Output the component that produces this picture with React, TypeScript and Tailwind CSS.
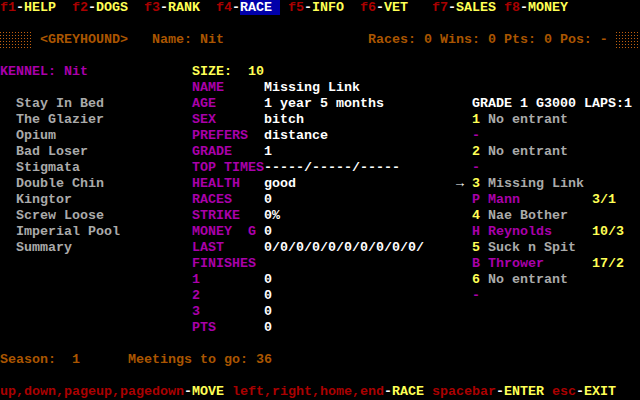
const RED = "text-[#aa0000]";
const YEL = "text-[#ffff55]";
const WHT = "text-white";
const BRN = "text-[#aa5500]";
const MAG = "text-[#aa00aa]";
const GRY = "text-[#aaaaaa]";

function Line({ children }: { children?: React.ReactNode }) {
  return <div className="h-4 leading-4 whitespace-pre">{children}</div>;
}

function Key({ k, label, active }: { k: string; label: string; active?: boolean }) {
  return (
    <>
      <span className={RED}>{k}</span>
      <span className={WHT}>-</span>
      {active ? (
        <span className="bg-[#0000aa] text-white">{label}</span>
      ) : (
        <span className={YEL}>{label}</span>
      )}
    </>
  );
}

function Shade() {
  return (
    <span className="inline-block h-4 w-[32px] align-top bg-[conic-gradient(at_1px_1px,transparent_75%,#c06010_0)] bg-size-[3px_3px]" />
  );
}

const dogs = [
  "Stay In Bed",
  "The Glazier",
  "Opium",
  "Bad Loser",
  "Stigmata",
  "Double Chin",
  "Kingtor",
  "Screw Loose",
  "Imperial Pool",
  "Summary",
];

const details: [string, string][] = [
  ["NAME", "Missing Link"],
  ["AGE", "1 year 5 months"],
  ["SEX", "bitch"],
  ["PREFERS", "distance"],
  ["GRADE", "1"],
  ["TOP TIMES", "-----/-----/-----"],
  ["HEALTH", "good"],
  ["RACES", "0"],
  ["STRIKE", "0%"],
  ["MONEY  G", "0"],
  ["LAST", "0/0/0/0/0/0/0/0/0/0/"],
  ["FINISHES", ""],
  ["1", "0"],
  ["2", "0"],
  ["3", "0"],
  ["PTS", "0"],
];

type Entry =
  | { kind: "dog"; trap: string; name: string; sel?: boolean }
  | { kind: "trainer"; mark: string; name: string; odds: string }
  | { kind: "none" };

const card: Entry[] = [
  { kind: "dog", trap: "1", name: "No entrant" },
  { kind: "none" },
  { kind: "dog", trap: "2", name: "No entrant" },
  { kind: "none" },
  { kind: "dog", trap: "3", name: "Missing Link", sel: true },
  { kind: "trainer", mark: "P", name: "Mann", odds: "3/1" },
  { kind: "dog", trap: "4", name: "Nae Bother" },
  { kind: "trainer", mark: "H", name: "Reynolds", odds: "10/3" },
  { kind: "dog", trap: "5", name: "Suck n Spit" },
  { kind: "trainer", mark: "B", name: "Thrower", odds: "17/2" },
  { kind: "dog", trap: "6", name: "No entrant" },
  { kind: "none" },
];

export default function App() {
  return (
    <div className="w-[640px] h-[400px] bg-black overflow-hidden font-['Liberation_Mono','DejaVu_Sans_Mono',monospace] text-[13.3333px] font-bold">
      <Line>
        <Key k="f1" label="HELP" />{"  "}
        <Key k="f2" label="DOGS" />{"  "}
        <Key k="f3" label="RANK" />{"  "}
        <Key k="f4" label="RACE " active />{" "}
        <Key k="f5" label="INFO" />{"  "}
        <Key k="f6" label="VET" />{"   "}
        <Key k="f7" label="SALES" />{" "}
        <Key k="f8" label="MONEY" />
      </Line>
      <Line />
      <Line>
        <Shade />
        <span className={BRN}>{" <GREYHOUND>   Name: Nit                  Races: 0 Wins: 0 Pts: 0 Pos: - "}</span>
        <Shade />
      </Line>
      <Line />

      <div className="flex">
        <div className="w-[192px]">
          <Line>
            <span className={MAG}>KENNEL: Nit</span>
          </Line>
          <Line />
          {dogs.map((d) => (
            <Line key={d}>
              <span className={GRY}>{"  " + d}</span>
            </Line>
          ))}
        </div>

        <div className="w-[264px]">
          <Line>
            <span className={YEL}>{"SIZE:  10"}</span>
          </Line>
          {details.map(([label, value]) => (
            <Line key={label}>
              <span className={`inline-block w-[72px] ${MAG}`}>{label}</span>
              <span className={WHT}>{value}</span>
            </Line>
          ))}
        </div>

        <div className="flex-1">
          <Line />
          <Line />
          <Line>
            <span className={WHT}>{"  GRADE 1 G3000 LAPS:1"}</span>
          </Line>
          {card.map((e, i) => (
            <Line key={i}>
              {e.kind === "none" && <span className={MAG}>{"  -"}</span>}
              {e.kind === "dog" && (
                <>
                  <span className={WHT}>{e.sel ? "→ " : "  "}</span>
                  <span className={YEL}>{e.trap}</span>
                  <span className={GRY}>{" " + e.name}</span>
                </>
              )}
              {e.kind === "trainer" && (
                <>
                  <span className={`inline-block w-[136px] ${MAG}`}>{"  " + e.mark + " " + e.name}</span>
                  <span className={YEL}>{e.odds}</span>
                </>
              )}
            </Line>
          ))}
        </div>
      </div>

      <Line />
      <Line>
        <span className={BRN}>{"Season:  1      Meetings to go: 36"}</span>
      </Line>
      <Line />
      <Line>
        <span className={RED}>up,down,pageup,pagedown</span>
        <span className={WHT}>-</span>
        <span className={YEL}>MOVE</span>
        <span className={RED}> left,right,home,end</span>
        <span className={WHT}>-</span>
        <span className={YEL}>RACE</span>
        <span className={RED}> spacebar</span>
        <span className={WHT}>-</span>
        <span className={YEL}>ENTER</span>
        <span className={RED}> esc</span>
        <span className={WHT}>-</span>
        <span className={YEL}>EXIT</span>
      </Line>
    </div>
  );
}
